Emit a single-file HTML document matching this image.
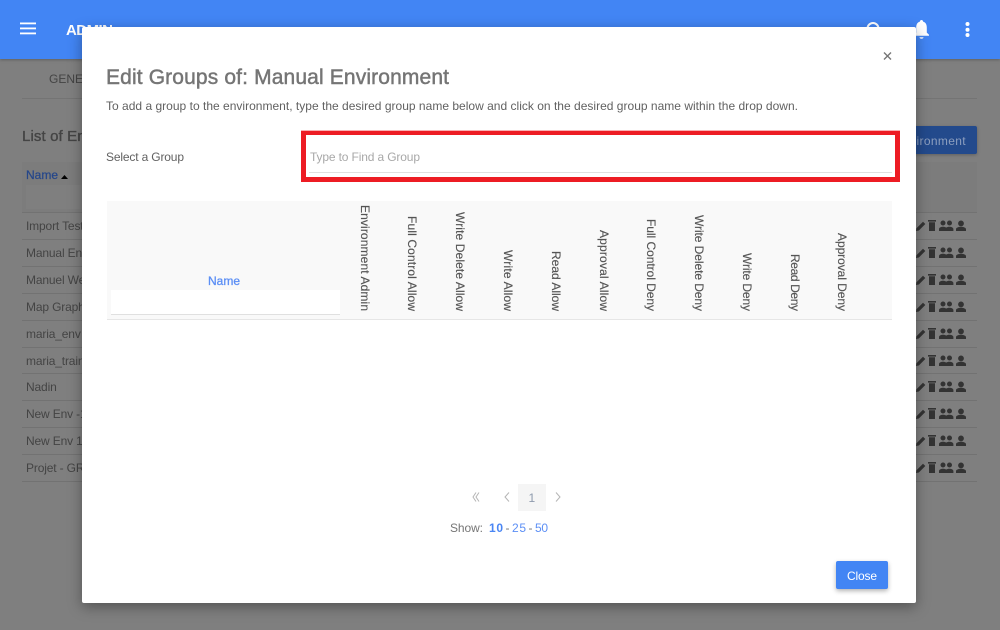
<!DOCTYPE html>
<html>
<head>
<meta charset="utf-8">
<style>
html{background:#7f7f7f}
html,body{margin:0;padding:0;width:1000px;height:630px;overflow:hidden;font-family:"Liberation Sans",sans-serif}
body{background:#7f7f7f;filter:blur(.3px)}
.a{position:absolute}
svg{position:absolute;left:0;top:0;overflow:visible}
text{font-family:"Liberation Sans",sans-serif}
.ln{position:absolute;left:22px;width:955px;height:1px;background:#727272}
</style>
</head>
<body>
<!-- header -->
<div class="a" style="left:0;top:0;width:1000px;height:59px;background:#4285f4;box-shadow:0 1px 3px rgba(0,0,0,.25)"></div>
<!-- dimmed page -->
<div class="a" style="left:22px;top:98px;width:955px;height:1px;background:#747474"></div>
<div class="a" style="left:22px;top:162px;width:955px;height:50px;background:#7c7c7c"></div>
<div class="a" style="left:26px;top:185px;width:60px;height:24px;background:#7f7f7f"></div>
<div class="ln" style="top:212px"></div><div class="ln" style="top:239px"></div><div class="ln" style="top:266px"></div><div class="ln" style="top:293px"></div><div class="ln" style="top:320px"></div><div class="ln" style="top:347px"></div><div class="ln" style="top:373px"></div><div class="ln" style="top:400px"></div><div class="ln" style="top:427px"></div><div class="ln" style="top:454px"></div><div class="ln" style="top:481px"></div>
<div class="a" style="left:880px;top:126px;width:97px;height:28px;background:#234a8c;border-radius:2px;box-shadow:0 1px 3px rgba(0,0,0,.25)"></div>

<svg width="1000" height="630">
 <g fill="#fff">
  <rect x="20" y="22.500" width="16" height="1.800"/><rect x="20" y="27.500" width="16" height="1.800"/><rect x="20" y="32.500" width="16" height="1.800"/>
  <text x="66" y="35" font-size="15" font-weight="700" textLength="47" lengthAdjust="spacing">ADMIN</text>
  <circle cx="873" cy="28.500" r="5.500" fill="none" stroke="#fff" stroke-width="2"/>
  <path d="M921.500 20c1 0 1.600.7 1.600 1.600 2.800.9 3.700 3.200 3.700 6v5l2.200 2.200v1h-15v-1l2.200-2.200v-5c0-2.800.9-5.100 3.700-6 0-.9.600-1.600 1.600-1.600zM919.500 37.300h4c0 1-.9 1.500-2 1.500s-2-.5-2-1.500z"/>
  <circle cx="967.500" cy="24" r="2"/><circle cx="967.500" cy="29.700" r="2"/><circle cx="967.500" cy="35" r="2"/>
 </g>
 <g fill="#3d3d3d">
  <text x="49" y="83" font-size="12" fill="#444">GENERAL</text>
  <text x="22" y="141" font-size="15" font-weight="400" stroke="#444" stroke-width=".35" fill="#444" textLength="138" lengthAdjust="spacing">List of Environments</text>
  <text x="26" y="179" font-size="12" fill="#26478a" stroke="#26478a" stroke-width=".25" textLength="32" lengthAdjust="spacing">Name</text>
  <path d="M61 179l3.500-4 3.500 4z" fill="#000"/>
  <g font-size="12" fill="#444" letter-spacing="-.15">
   <text x="26" y="230">Import Test</text><text x="26" y="257">Manual Env</text><text x="26" y="284">Manuel Web</text><text x="26" y="311">Map Graph</text><text x="26" y="338">maria_env</text><text x="26" y="365">maria_train</text><text x="26" y="391">Nadin</text><text x="26" y="418">New Env -1</text><text x="26" y="445">New Env 1</text><text x="26" y="472">Projet - GR</text>
  </g>
  <text x="966" y="145" font-size="12" fill="#8d9fbf" text-anchor="end" letter-spacing=".35">Environment</text>
 </g>
 <defs>
  <g id="ic" fill="#333">
   <path d="M916 231l.5-2.800 6.500-6.500 2.300 2.300-6.500 6.500z"/>
   <path d="M928 220h8v1.600h-8zM929 222.300h6v8.700h-6z"/>
   <path d="M943 220.500a2.500 2.500 0 1 1 0 5 2.500 2.500 0 0 1 0-5zM949.500 220.500a2.500 2.500 0 1 1 0 5 2.500 2.500 0 0 1 0-5zM939 231v-1.800c0-1.700 2.300-2.400 4-2.400 1.200 0 2.400.3 3.200.8.800-.5 2-.8 3.200-.8 1.700 0 4 .7 4 2.400v1.800z"/>
   <path d="M961 220.500a2.900 2.900 0 1 1 0 5.800 2.900 2.900 0 0 1 0-5.800zM956 231v-1.800c0-1.700 3.300-2.400 5-2.400s5 .7 5 2.400v1.800z"/>
  </g>
 </defs>
 <use href="#ic"/><use href="#ic" y="27"/><use href="#ic" y="54"/><use href="#ic" y="81"/><use href="#ic" y="108"/><use href="#ic" y="135"/><use href="#ic" y="161"/><use href="#ic" y="188"/><use href="#ic" y="215"/><use href="#ic" y="242"/>
</svg>

<!-- modal -->
<div class="a" style="left:82px;top:27px;width:834px;height:576px;background:#fff;border-radius:2px;box-shadow:0 4px 14px rgba(0,0,0,.35)"></div>
<!-- red highlight -->
<div class="a" style="left:301px;top:131px;width:589px;height:42px;border:5px solid #ed1c24;border-top-width:4px;box-shadow:0 -1px 0 rgba(237,28,36,.35)"></div>
<div class="a" style="left:309px;top:172px;width:583px;height:1px;background:#e0e0e0"></div>
<!-- group table header -->
<div class="a" style="left:107px;top:201px;width:785px;height:118px;background:#f9f9f9;border-bottom:1px solid #e6e6e6"></div>
<div class="a" style="left:111px;top:290px;width:229px;height:24px;background:#fff;border-bottom:1px solid #e0e0e0"></div>
<!-- pager -->
<div class="a" style="left:518px;top:484px;width:28px;height:27px;background:#f5f5f5"></div>
<!-- close button -->
<div class="a" style="left:836px;top:561px;width:52px;height:28px;background:#4285f4;border-radius:2px;box-shadow:0 2px 5px rgba(0,0,0,.3)"></div>

<svg width="1000" height="630">
 <path d="M884 52.500l7 7M891 52.500l-7 7" stroke="#757575" stroke-width="1.400" fill="none"/>
 <text x="106" y="84" font-size="21" fill="#757575" stroke="#757575" stroke-width=".45" textLength="343" lengthAdjust="spacing">Edit Groups of: Manual Environment</text>
 <text x="106" y="110" font-size="12" fill="#616161" textLength="692" lengthAdjust="spacing">To add a group to the environment, type the desired group name below and click on the desired group name within the drop down.</text>
 <text x="106" y="161" font-size="12" fill="#616161" textLength="78" lengthAdjust="spacing">Select a Group</text>
 <text x="310" y="161" font-size="12" fill="#a8a8a8" textLength="110" lengthAdjust="spacing">Type to Find a Group</text>
 <text x="208" y="285" font-size="12" fill="#5c8ff5" stroke="#5c8ff5" stroke-width=".3" textLength="32" lengthAdjust="spacing">Name</text>
 <g font-size="12" fill="#555" stroke="#555" stroke-width=".15">
  <text transform="translate(361,205) rotate(90)" textLength="106" lengthAdjust="spacing">Environment Admin</text>
  <text transform="translate(408,216) rotate(90)" textLength="95" lengthAdjust="spacing">Full Control Allow</text>
  <text transform="translate(456,212) rotate(90)" textLength="99" lengthAdjust="spacing">Write Delete Allow</text>
  <text transform="translate(504,250) rotate(90)" textLength="61" lengthAdjust="spacing">Write Allow</text>
  <text transform="translate(552,251) rotate(90)" textLength="60" lengthAdjust="spacing">Read Allow</text>
  <text transform="translate(600,230) rotate(90)" textLength="81" lengthAdjust="spacing">Approval Allow</text>
  <text transform="translate(647,219) rotate(90)" textLength="92" lengthAdjust="spacing">Full Control Deny</text>
  <text transform="translate(695,215) rotate(90)" textLength="96" lengthAdjust="spacing">Write Delete Deny</text>
  <text transform="translate(743,253) rotate(90)" textLength="58" lengthAdjust="spacing">Write Deny</text>
  <text transform="translate(791,254) rotate(90)" textLength="57" lengthAdjust="spacing">Read Deny</text>
  <text transform="translate(838,233) rotate(90)" textLength="78" lengthAdjust="spacing">Approval Deny</text>
 </g>
 <g fill="none" stroke="#b5b5b5" stroke-width="1">
  <path d="M476 492.500l-3 4.500 3 4.500M479 492.500l-3 4.500 3 4.500"/>
  <path d="M509 492.500l-4 4.500 4 4.500"/>
  <path d="M556 492.500l4 4.500-4 4.500"/>
 </g>
 <text x="528.500" y="502" font-size="12" fill="#8e9aad">1</text>
 <text x="450" y="532" font-size="12" fill="#757575" textLength="33" lengthAdjust="spacing">Show:</text>
 <text x="489" y="532" font-size="12" font-weight="700" fill="#4a86f4" textLength="14" lengthAdjust="spacing">10</text>
 <text x="505.500" y="532" font-size="12" fill="#757575">-</text>
 <text x="512" y="532" font-size="12" fill="#5c8ff5" textLength="14" lengthAdjust="spacing">25</text>
 <text x="528.500" y="532" font-size="12" fill="#757575">-</text>
 <text x="535" y="532" font-size="12" fill="#5c8ff5" textLength="13" lengthAdjust="spacing">50</text>
 <text x="847" y="580" font-size="12" fill="#fff" textLength="30" lengthAdjust="spacing">Close</text>
</svg>
</body>
</html>
